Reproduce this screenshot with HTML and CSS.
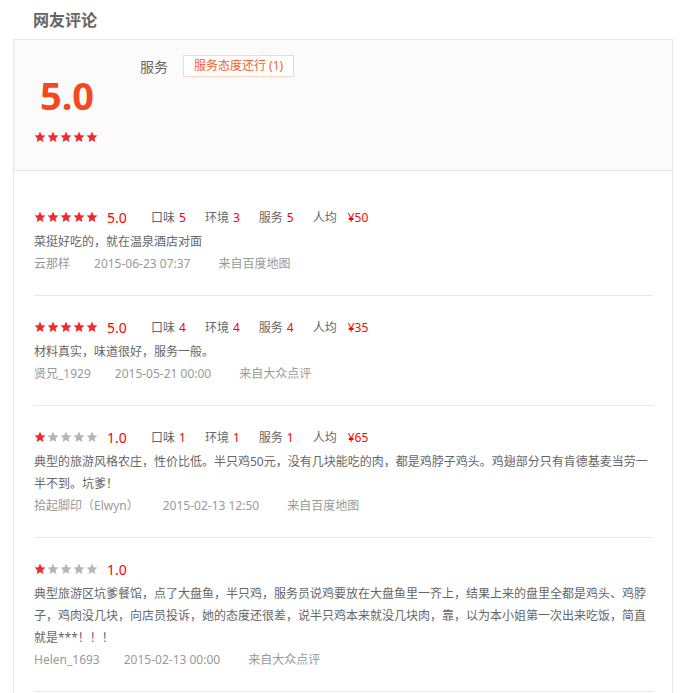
FILE: index.html
```html
<!DOCTYPE html>
<html lang="zh-CN">
<head>
<meta charset="utf-8">
<title>网友评论</title>
<link rel="stylesheet" href="styles.css">
</head>
<body>
<svg class="defs" width="0" height="0" aria-hidden="true">
  <symbol id="star" viewBox="0 0 24 24">
    <path d="M12 1.2l3.2 7.1 7.7.8-5.8 5.2 1.7 7.6L12 18 5.2 21.9l1.7-7.6-5.8-5.2 7.7-.8z"/>
  </symbol>
</svg>
<div class="page">
  <h2 class="title">网友评论</h2>
  <div class="box">
    <div class="summary">
      <div class="overall">
        <div class="overall-score">5.0</div>
        <div class="stars">
          <svg class="star on"><use href="#star"/></svg><svg class="star on"><use href="#star"/></svg><svg class="star on"><use href="#star"/></svg><svg class="star on"><use href="#star"/></svg><svg class="star on"><use href="#star"/></svg>
        </div>
      </div>
      <div class="tags">
        <span class="tag-label">服务</span>
        <span class="tag">服务态度还行 (1)</span>
      </div>
    </div>
    <ul class="reviews">
      <li class="review">
        <div class="rate-row">
          <div class="stars">
            <svg class="star on"><use href="#star"/></svg><svg class="star on"><use href="#star"/></svg><svg class="star on"><use href="#star"/></svg><svg class="star on"><use href="#star"/></svg><svg class="star on"><use href="#star"/></svg>
          </div>
          <span class="score">5.0</span>
          <span class="item">口味<em>5</em></span>
          <span class="item">环境<em>3</em></span>
          <span class="item">服务<em>5</em></span>
          <span class="item price">人均<em>¥50</em></span>
        </div>
        <p class="content">菜挺好吃的，就在温泉酒店对面</p>
        <div class="meta"><span>云那样</span><span class="date">2015-06-23 07:37</span><span>来自百度地图</span></div>
      </li>
      <li class="review">
        <div class="rate-row">
          <div class="stars">
            <svg class="star on"><use href="#star"/></svg><svg class="star on"><use href="#star"/></svg><svg class="star on"><use href="#star"/></svg><svg class="star on"><use href="#star"/></svg><svg class="star on"><use href="#star"/></svg>
          </div>
          <span class="score">5.0</span>
          <span class="item">口味<em>4</em></span>
          <span class="item">环境<em>4</em></span>
          <span class="item">服务<em>4</em></span>
          <span class="item price">人均<em>¥35</em></span>
        </div>
        <p class="content">材料真实，味道很好，服务一般。</p>
        <div class="meta"><span>贤兄_1929</span><span class="date">2015-05-21 00:00</span><span>来自大众点评</span></div>
      </li>
      <li class="review">
        <div class="rate-row">
          <div class="stars">
            <svg class="star on"><use href="#star"/></svg><svg class="star"><use href="#star"/></svg><svg class="star"><use href="#star"/></svg><svg class="star"><use href="#star"/></svg><svg class="star"><use href="#star"/></svg>
          </div>
          <span class="score">1.0</span>
          <span class="item">口味<em>1</em></span>
          <span class="item">环境<em>1</em></span>
          <span class="item">服务<em>1</em></span>
          <span class="item price">人均<em>¥65</em></span>
        </div>
        <p class="content">典型的旅游风格农庄，性价比低。半只鸡50元，没有几块能吃的肉，都是鸡脖子鸡头。鸡翅部分只有肯德基麦当劳一半不到。坑爹！</p>
        <div class="meta"><span>拾起脚印（Elwyn）</span><span class="date">2015-02-13 12:50</span><span>来自百度地图</span></div>
      </li>
      <li class="review">
        <div class="rate-row">
          <div class="stars">
            <svg class="star on"><use href="#star"/></svg><svg class="star"><use href="#star"/></svg><svg class="star"><use href="#star"/></svg><svg class="star"><use href="#star"/></svg><svg class="star"><use href="#star"/></svg>
          </div>
          <span class="score">1.0</span>
        </div>
        <p class="content">典型旅游区坑爹餐馆，点了大盘鱼，半只鸡，服务员说鸡要放在大盘鱼里一齐上，结果上来的盘里全都是鸡头、鸡脖子，鸡肉没几块，向店员投诉，她的态度还很差，说半只鸡本来就没几块肉，靠，以为本小姐第一次出来吃饭，简直就是***！！！</p>
        <div class="meta"><span>Helen_1693</span><span class="date">2015-02-13 00:00</span><span>来自大众点评</span></div>
      </li>
    </ul>
  </div>
</div>
</body>
</html>
```
FILE: styles.css
```css
html, body {
  margin: 0;
  padding: 0;
  background: #fff;
}
body {
  font-family: "Noto Sans", "Noto Sans CJK SC", sans-serif;
  font-size: 12px;
  color: #666;
}
.defs {
  position: absolute;
  width: 0;
  height: 0;
  overflow: hidden;
}
.page {
  margin-left: 13px;
  width: 660px;
}
.title {
  margin: 8px 0 7px;
  padding-left: 20px;
  font-size: 16px;
  line-height: 24px;
  font-weight: bold;
  color: #666;
}
.box {
  border: 1px solid #e6e6e6;
  border-bottom: none;
  height: 700px;
}
.summary {
  display: flex;
  height: 130px;
  background: #fbfbfb;
  border-bottom: 1px solid #e6e6e6;
  padding: 0 20px;
}
.overall {
  width: 64px;
  display: flex;
  flex-direction: column;
  align-items: center;
  padding-top: 35px;
}
.overall-score {
  font-size: 38px;
  line-height: 40px;
  font-weight: bold;
  color: #f24a1d;
  margin-left: 2px;
}
.overall .stars {
  margin-top: 16px;
}
.stars {
  display: flex;
  gap: 1px;
}
.star {
  width: 12px;
  height: 12px;
  fill: #b5b5b5;
}
.star.on {
  fill: #f2282c;
}
.tags {
  margin-left: 42px;
  padding-top: 15px;
  display: flex;
  align-items: center;
  height: 22px;
}
.tag-label {
  font-size: 14px;
  color: #666;
}
.tag {
  margin-left: 15px;
  height: 22px;
  line-height: 20px;
  box-sizing: border-box;
  padding: 0 10px;
  border: 1px solid #fcd6c1;
  background: #fff;
  color: #f7602a;
  font-size: 12px;
}
.reviews {
  list-style: none;
  margin: 0;
  padding: 15px 0 16px;
}
.review {
  margin: 0 19px 0 20px;
  padding: 17px 0 20px;
  border-bottom: 1px solid #e8e8e8;
}
.rate-row {
  display: flex;
  align-items: center;
  height: 28px;
}
.score {
  margin-left: 9px;
  width: 44px;
  font-size: 14px;
  color: #f00;
}
.item {
  margin-right: 19px;
  color: #666;
}
.item em {
  font-style: normal;
  color: #f00;
  margin-left: 4px;
}
.item.price em {
  margin-left: 11px;
}
.content {
  margin: 0;
  line-height: 22px;
  color: #666;
}
.meta {
  line-height: 22px;
  color: #999;
}
.meta span {
  margin-right: 24px;
}
.meta .date {
  margin-right: 28px;
}
```
